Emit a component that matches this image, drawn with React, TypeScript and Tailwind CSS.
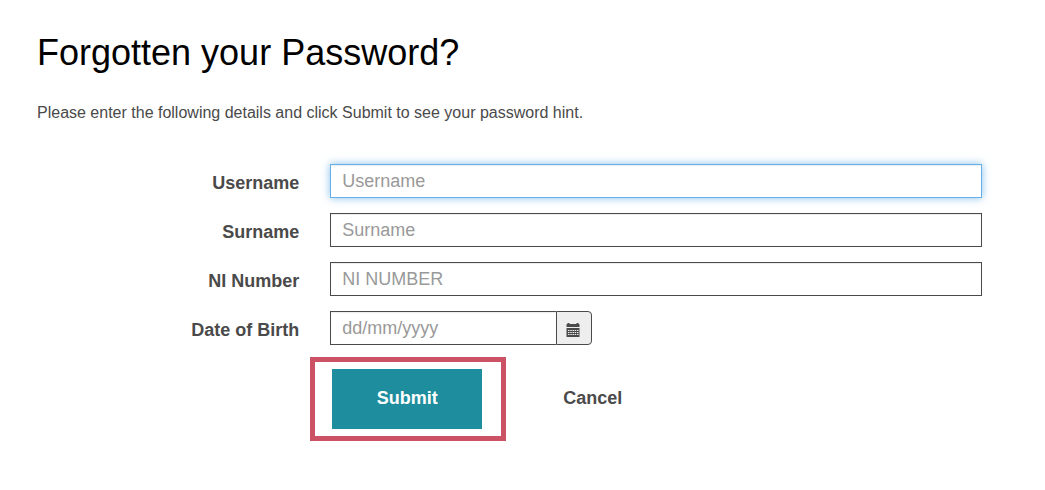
import React from "react";

const labelClass =
  "w-1/4 shrink-0 pt-1.5 pr-4 text-right text-lg leading-[26px] font-bold text-[#4a4a4a]";
const inputBase =
  "h-[34px] w-full border bg-white px-[11px] text-lg leading-6 text-[#4a4a4a] placeholder:text-[#999999] outline-none";
const inputClass = `${inputBase} border-[#4a4a4a] shadow-[inset_0_1px_1px_rgba(0,0,0,0.075)]`;
const activeInputClass = `${inputBase} border-[#66afe9] shadow-[inset_0_1px_1px_rgba(0,0,0,0.075),0_0_8px_rgba(102,175,233,0.8)]`;

function Field({
  id,
  label,
  placeholder,
  active = false,
}: {
  id: string;
  label: string;
  placeholder: string;
  active?: boolean;
}) {
  return (
    <div className="flex">
      <label htmlFor={id} className={labelClass}>
        {label}
      </label>
      <div className="w-3/4 px-[15px]">
        <input
          id={id}
          type="text"
          placeholder={placeholder}
          className={active ? activeInputClass : inputClass}
        />
      </div>
    </div>
  );
}

function CalendarIcon() {
  return (
    <svg width="14" height="14" viewBox="0 0 14 14" fill="#4a4a4a" aria-hidden="true">
      <path d="M1.5 0h2v1h7V0h2v1h.6a.4.4 0 0 1 .4.4V4H.5V1.400a.4.4 0 0 1 .4-.4h.6z" />
      <path
        fillRule="evenodd"
        d="M.5 5h13v8.500a.5.5 0 0 1-.5.5H1a.5.5 0 0 1-.5-.5zM2 7h1.500v1H2zM4.300 7h1.500v1H4.300zM6.500 7H8v1H6.500zM8.700 7h1.500v1H8.700zM11 7h1.500v1H11zM2 9h1.500v1H2zM4.300 9h1.500v1H4.300zM6.500 9H8v1H6.500zM8.700 9h1.500v1H8.700zM11 9h1.500v1H11zM2 11h1.500v1H2zM4.300 11h1.500v1H4.300zM6.500 11H8v1H6.500zM8.700 11h1.500v1H8.700zM11 11h1.500v1H11z"
      />
    </svg>
  );
}

export default function App() {
  return (
    <main className="bg-white pt-[33px] pr-12 pb-12 pl-[37px] font-['Liberation_Sans',Arial,sans-serif]">
      <h1 className="text-4xl leading-10 text-black">Forgotten your Password?</h1>
      <p className="mt-7 text-base leading-6 text-[#4a4a4a]">
        Please enter the following details and click Submit to see your password hint.
      </p>

      <form className="mt-[39px] ml-[51px] flex flex-col" onSubmit={(e) => e.preventDefault()}>
        <div className="flex flex-col gap-[15px]">
          <Field id="username" label="Username" placeholder="Username" active />
          <Field id="surname" label="Surname" placeholder="Surname" />
          <Field id="ni-number" label="NI Number" placeholder="NI NUMBER" />
          <div className="flex">
            <label htmlFor="dob" className={labelClass}>
              Date of Birth
            </label>
            <div className="flex w-3/4 px-[15px]">
              <div className="w-[226px]">
                <input id="dob" type="text" placeholder="dd/mm/yyyy" className={`${inputClass} border-r-0`} />
              </div>
              <button
                type="button"
                aria-label="Choose date"
                className="flex h-[34px] w-9 items-center justify-center rounded-r border border-[#4a4a4a] bg-[#eeeeee] pt-1 pr-0.5"
              >
                <CalendarIcon />
              </button>
            </div>
          </div>
        </div>

        <div className="mt-3 flex">
          <div className="w-1/4 shrink-0" />
          <div className="-ml-[5px] flex items-center">
            <div className="border-5 border-[#cb5264] py-[7px] pr-[19px] pl-[17px]">
              <button
                type="submit"
                className="block h-[60px] w-[150px] bg-[#1e8e9e] pb-[2px] text-lg font-bold text-white"
              >
                Submit
              </button>
            </div>
            <a href="#" className="ml-[57px] pb-[2px] text-lg font-bold text-[#4a4a4a]">
              Cancel
            </a>
          </div>
        </div>
      </form>
    </main>
  );
}
